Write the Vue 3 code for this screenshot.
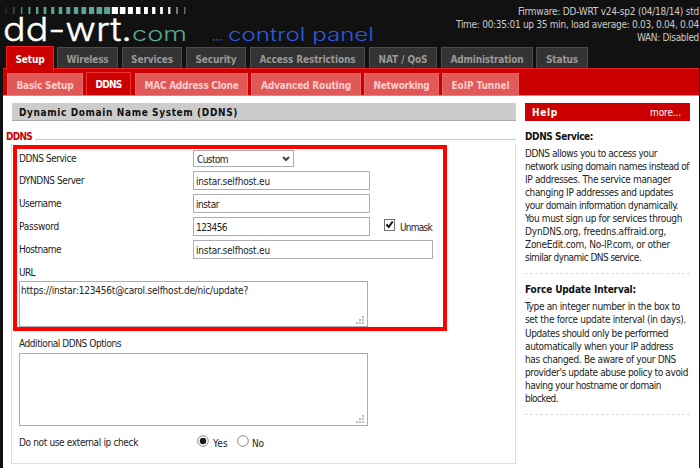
<script setup>
const bars = Array.from({ length: 24 }, (_, i) => {
  const w = i < 14 ? 0.7 + i * 0.41 : 6.2 - (i - 14) * 0.58
  return {
    x: 6.1 + i * 7.77 - w / 2,
    w,
    fill: i < 14 ? '#5aa593' : '#fff',
    opacity: i < 3 ? 0.5 + i * 0.15 : i > 21 ? 0.55 : 1,
  }
})

const status = [
  ['Firmware: DD-WRT v24-sp2 (04/18/14) std', 181],
  ['Time: 00:35:01 up 35 min, load average: 0.03, 0.04, 0.04', 243],
  ['WAN: Disabled', 62],
]

const tabs = [
  { label: 'Setup', tw: 29, cls: 'setup' },
  { label: 'Wireless', tw: 42, cls: 'wireless' },
  { label: 'Services', tw: 42, cls: 'services' },
  { label: 'Security', tw: 41, cls: 'security' },
  { label: 'Access Restrictions', tw: 96, cls: 'access' },
  { label: 'NAT / QoS', tw: 49, cls: 'nat' },
  { label: 'Administration', tw: 73, cls: 'admin' },
  { label: 'Status', tw: 32, cls: 'status-tab' },
]

const subTabs = [
  { label: 'Basic Setup', tw: 57, cls: 'basic' },
  { label: 'DDNS', tw: 26, cls: 'ddns' },
  { label: 'MAC Address Clone', tw: 94, cls: 'mac' },
  { label: 'Advanced Routing', tw: 90, cls: 'routing' },
  { label: 'Networking', tw: 56, cls: 'network' },
  { label: 'EoIP Tunnel', tw: 58, cls: 'eoip' },
]

const help = [
  {
    title: ['DDNS Service:', 68],
    lines: [
      ['DDNS allows you to access your', 132],
      ['network using domain names instead of', 164],
      ['IP addresses. The service manager', 146],
      ['changing IP addresses and updates', 148],
      ['your domain information dynamically.', 153],
      ['You must sign up for services through', 157],
      ['DynDNS.org, freedns.affraid.org,', 141],
      ['ZoneEdit.com, No-IP.com, or other', 145],
      ['similar dynamic DNS service.', 116],
    ],
  },
  {
    title: ['Force Update Interval:', 111],
    lines: [
      ['Type an integer number in the box to', 155],
      ['set the force update interval (in days).', 161],
      ['Updates should only be performed', 143],
      ['automatically when your IP address', 148],
      ['has changed. Be aware of your DNS', 151],
      ["provider's update abuse policy to avoid", 163],
      ['having your hostname or domain', 136],
      ['blocked.', 33],
    ],
  },
]

// Tracks a label so that its text run takes the given width in pixels.
const vFit = {
  mounted(el, { value }) {
    const range = document.createRange()
    range.selectNodeContents(el)
    const natural = range.getBoundingClientRect().width
    el.style.letterSpacing = `${(value - natural) / el.textContent.length}px`
  },
}
</script>

<template>
  <div class="page">
    <header class="header">
      <svg class="logo" width="400" height="54" viewBox="0 0 400 54">
        <rect v-for="(b, i) in bars" :key="i" :x="b.x" y="7" :width="b.w" height="7" :fill="b.fill" :opacity="b.opacity" />
        <text class="brand" x="3" y="41" textLength="129" lengthAdjust="spacingAndGlyphs">dd-wrt.</text>
        <text class="com" x="132" y="41" textLength="55" lengthAdjust="spacingAndGlyphs">com</text>
        <text class="panel-dots" x="212" y="41" textLength="11" lengthAdjust="spacingAndGlyphs">...</text>
        <text class="panel" x="228" y="41" textLength="146" lengthAdjust="spacingAndGlyphs">control panel</text>
      </svg>
      <div class="status">
        <div v-for="s in status" :key="s[0]"><span v-fit="s[1]">{{ s[0] }}</span></div>
      </div>
    </header>

    <nav class="tabs">
      <a v-for="(t, i) in tabs" :key="t.label" :class="['tab', t.cls, { active: i === 0 }]"><span v-fit="t.tw">{{ t.label }}</span></a>
    </nav>

    <div class="body">
      <nav class="subtabs">
        <a v-for="(t, i) in subTabs" :key="t.label" :class="['sub', t.cls, { active: i === 1 }]"><span v-fit="t.tw">{{ t.label }}</span></a>
      </nav>

      <div class="columns">
        <main class="main">
          <h1 class="title"><span v-fit="219">Dynamic Domain Name System (DDNS)</span></h1>
          <div class="legend"><span v-fit="26">DDNS</span><i></i></div>
          <section class="fieldset">
            <div class="highlight"></div>
            <div class="row service">
              <label><span v-fit="57">DDNS Service</span></label>
              <div class="field select">
                <span v-fit="31">Custom</span>
                <svg width="8" height="6" viewBox="0 0 8 6"><path d="M1 1 L4 4 L7 1" fill="none" stroke="#444" stroke-width="2" /></svg>
              </div>
            </div>
            <div class="row server">
              <label><span v-fit="65">DYNDNS Server</span></label>
              <div class="field"><span v-fit="74">instar.selfhost.eu</span></div>
            </div>
            <div class="row user">
              <label><span v-fit="42">Username</span></label>
              <div class="field"><span v-fit="23">instar</span></div>
            </div>
            <div class="row pass">
              <label><span v-fit="40">Password</span></label>
              <div class="field"><span v-fit="31">123456</span></div>
              <svg class="check" width="11" height="12" viewBox="0 0 11 12"><rect x=".5" y=".5" width="10" height="11" fill="#fff" stroke="#707070" /><path d="M2.5 5.5 L4.7 8 L8.7 2.5" fill="none" stroke="#111" stroke-width="2" /></svg>
              <span class="unmask"><span v-fit="32">Unmask</span></span>
            </div>
            <div class="row host">
              <label><span v-fit="42">Hostname</span></label>
              <div class="field wide"><span v-fit="74">instar.selfhost.eu</span></div>
            </div>
            <div class="caption url"><span v-fit="16">URL</span></div>
            <div class="area url-area">
              <span v-fit="227">https://instar:123456t@carol.selfhost.de/nic/update?</span>
              <svg class="grip" width="8" height="8" viewBox="0 0 8 8"><path d="M6 0h2v2h-2zM3 3h2v2h-2zM6 3h2v2h-2zM0 6h2v2h-2zM3 6h2v2h-2zM6 6h2v2h-2z" fill="#bbb" /></svg>
            </div>
            <div class="caption options"><span v-fit="102">Additional DDNS Options</span></div>
            <div class="area options-area">
              <svg class="grip" width="8" height="8" viewBox="0 0 8 8"><path d="M6 0h2v2h-2zM3 3h2v2h-2zM6 3h2v2h-2zM0 6h2v2h-2zM3 6h2v2h-2zM6 6h2v2h-2z" fill="#bbb" /></svg>
            </div>
            <div class="row external">
              <label><span v-fit="119">Do not use external ip check</span></label>
              <svg class="radio" width="12" height="12" viewBox="0 0 12 12"><circle cx="6" cy="6" r="5.3" fill="#fff" stroke="#8a8a8a" /><circle cx="6" cy="6" r="3.2" fill="#1c1c1c" /></svg>
              <span class="yes"><span v-fit="15">Yes</span></span>
              <svg class="radio" width="12" height="12" viewBox="0 0 12 12"><circle cx="6" cy="6" r="5.3" fill="#fff" stroke="#8a8a8a" /></svg>
              <span class="no"><span v-fit="12">No</span></span>
            </div>
          </section>
        </main>

        <aside class="help">
          <div class="help-bar"><b v-fit="26">Help</b><span v-fit="31">more...</span></div>
          <section v-for="h in help" :key="h.title[0]" class="topic">
            <h2><span v-fit="h.title[1]">{{ h.title[0] }}</span></h2>
            <p v-for="l in h.lines" :key="l[0]"><span v-fit="l[1]">{{ l[0] }}</span></p>
          </section>
        </aside>
      </div>
    </div>
  </div>
</template>

<style>
body { margin: 0; background: #111; overflow: hidden; }
</style>

<style scoped>
* { box-sizing: border-box; }
.page {
  width: 700px; height: 468px; overflow: hidden; background: #111;
  display: flex; flex-direction: column;
  font: 10px/13px "DejaVu Sans Condensed", "DejaVu Sans", sans-serif;
  font-stretch: condensed; color: #222; white-space: nowrap;
}
.header { height: 46px; flex: none; display: flex; justify-content: space-between; align-items: flex-start; }
.logo { flex: none; }
.brand, .com, .panel, .panel-dots { font-family: Inter, sans-serif; font-weight: 300; }
.brand { font-size: 33px; fill: #fff; stroke: #fff; stroke-width: 0.4px; }
.com { font-size: 20px; fill: #5aa593; }
.panel, .panel-dots { font-size: 18px; fill: #2b5ce0; }
.status { padding: 5px 1px 0 0; text-align: right; color: #ccc; }

.tabs { height: 22px; flex: none; display: flex; align-items: flex-end; padding-left: 6px; position: relative; z-index: 1; }
.tab {
  height: 21px; margin-right: 4px; display: flex; justify-content: center; align-items: center;
  padding-top: 3px; background: #333; border: 1px solid #4c4c4c; border-bottom: 0; color: #999; font-weight: bold;
}
.tab.active { height: 24px; margin: 0 3px -2px 0; padding-bottom: 1px; background: #c00; border-color: #e22; color: #fff; }
.setup { width: 48px; }
.wireless { width: 61px; }
.services { width: 60px; }
.security { width: 60px; }
.access { width: 115px; }
.nat { width: 68px; }
.admin { width: 92px; margin-right: 3px; }
.status-tab { width: 52px; }

.body { flex: 1; margin: 0 1px 0 3px; background: #fff; }
.subtabs { height: 28px; display: flex; align-items: flex-end; padding-left: 4px; background: #c00; border-top: 1px solid #e22; border-bottom: 1px solid #e98080; }
.sub {
  height: 22px; display: flex; justify-content: center; align-items: center; padding-top: 2px; margin-right: 3px;
  background: #e05858; border: 1px solid #e86a6a; border-bottom: 0; color: #ffcece; font-weight: bold;
}
.sub.active { height: 23px; background: #c00; border-color: #e33; color: #fff; margin-right: 4px; padding-top: 1px; }
.basic { width: 76px; }
.ddns { width: 45px; }
.mac { width: 113px; }
.routing { width: 110px; }
.network { width: 75px; }
.eoip { width: 77px; }

.columns { display: flex; justify-content: space-between; padding: 7px 9px 0 3px; }
.main { width: 510px; }
.title {
  width: 504px; height: 18px; margin: 0 0 0 6px; padding: 1px 0 0 7px; display: flex; align-items: center;
  background: #ccc; border-bottom: 1px solid #aaa; font-size: 10px; color: #111;
}
.legend { display: flex; align-items: center; gap: 3px; height: 13px; margin-top: 9px; color: #c00; font-weight: bold; }
.legend i { flex: 1; height: 1px; margin-top: 5px; background: #ccc; }
.fieldset { position: relative; height: 321px; margin-left: 5px; padding: 7px 0 0 7px; border: solid #ddd; border-width: 0 1px 1px 1px; }
.highlight { position: absolute; z-index: 1; left: 1px; top: 2px; width: 434px; height: 186px; border: 4px solid #f00; }
.row { display: flex; align-items: center; }
.row label { width: 174px; flex: none; }
.field {
  width: 177px; height: 19px; padding: 1px 0 0 2px; display: flex; align-items: center;
  border: 1px solid #aaadb2; background: #fff; flex: none;
}
.select { width: 101px; height: 17px; justify-content: space-between; padding: 1px 3px 0; }
.wide { width: 240px; }
.service { height: 17px; }
.server { height: 19px; margin-top: 4px; }
.user { height: 19px; margin-top: 4px; }
.pass { height: 19px; margin-top: 4px; }
.host { height: 19px; margin-top: 4px; }
.check { margin: 0 5px 3px 14px; }
.unmask { padding-top: 1px; }
.caption { height: 13px; }
.url { margin-top: 7px; }
.area { position: relative; width: 349px; border: 1px solid #aaadb2; background: #fff; }
.url-area { height: 46px; margin-top: 2px; padding: 2px 0 0 1px; }
.grip { position: absolute; right: 3px; bottom: 2px; }
.options { margin-top: 10px; }
.options-area { height: 73px; margin-top: 3px; }
.external { height: 13px; margin-top: 10px; }
.external label { width: 178px; }
.radio { flex: none; margin-bottom: 3px; }
.yes { width: 19px; margin-left: 4px; margin-right: 5px; padding-top: 1px; }
.no { margin-left: 3px; padding-top: 1px; }

.help { width: 165px; }
.help-bar { height: 18px; display: flex; justify-content: space-between; align-items: center; padding: 1px 9px 0 7px; background: #c00; color: #fff; }
.topic { border-bottom: 1px dashed #ddd; padding-bottom: 9px; }
.topic h2 { margin: 9px 0 4px; font-size: 10px; line-height: 13px; color: #111; }
.topic p { margin: 0; line-height: 13.05px; }
</style>
